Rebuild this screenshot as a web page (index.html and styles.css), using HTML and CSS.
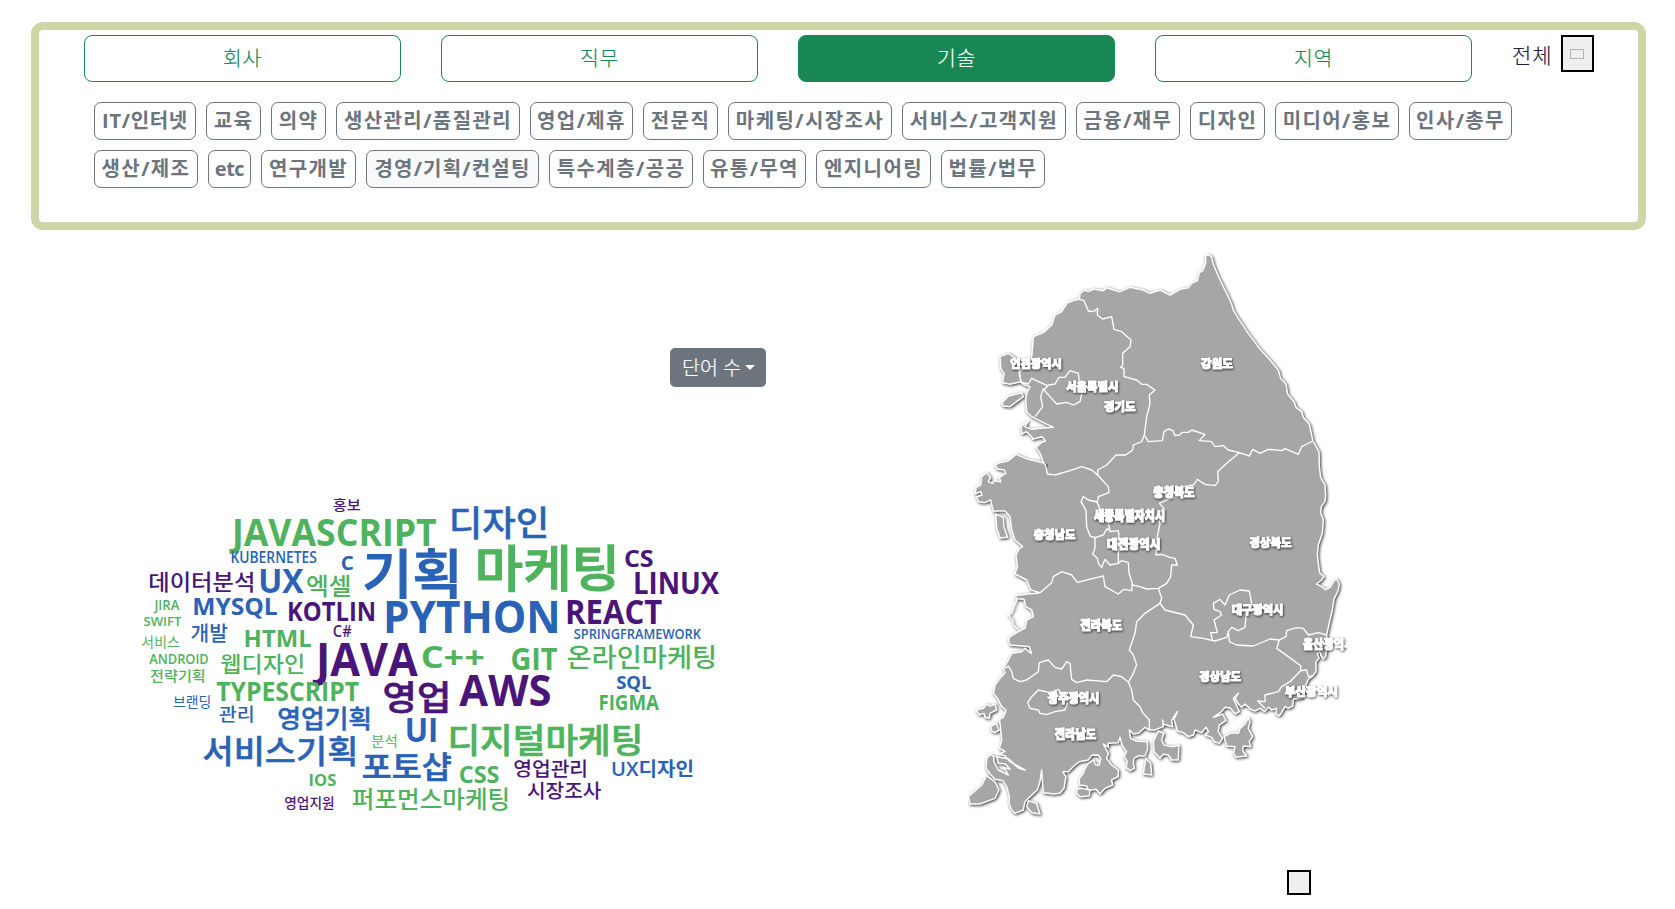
FILE: index.html
```html
<!DOCTYPE html>
<html lang="ko">
<head>
<meta charset="utf-8">
<title>채용 기술 분석</title>
<link rel="stylesheet" href="styles.css">
</head>
<body>
<section class="filters">
  <div class="tabs">
    <button class="tab">회사</button>
    <button class="tab">직무</button>
    <button class="tab active">기술</button>
    <button class="tab">지역</button>
    <div class="total"><span>전체</span><button class="square-btn"><i class="mark"></i></button></div>
  </div>
  <div class="chips">
    <button class="chip mixed" style="width:102px">IT/인터넷</button>
    <button class="chip" style="width:55px">교육</button>
    <button class="chip" style="width:55px">의약</button>
    <button class="chip" style="width:184px">생산관리/품질관리</button>
    <button class="chip" style="width:103px">영업/제휴</button>
    <button class="chip" style="width:75px">전문직</button>
    <button class="chip" style="width:164px">마케팅/시장조사</button>
    <button class="chip" style="width:164px">서비스/고객지원</button>
    <button class="chip" style="width:104px">금융/재무</button>
    <button class="chip" style="width:75px">디자인</button>
    <button class="chip" style="width:124px">미디어/홍보</button>
    <button class="chip" style="width:103px">인사/총무</button>
  </div>
  <div class="chips">
    <button class="chip" style="width:104px">생산/제조</button>
    <button class="chip latin" style="width:43px">etc</button>
    <button class="chip" style="width:95px">연구개발</button>
    <button class="chip hovered" style="width:173px">경영/기획/컨설팅</button>
    <button class="chip" style="width:144px">특수계층/공공</button>
    <button class="chip" style="width:103px">유통/무역</button>
    <button class="chip" style="width:115px">엔지니어링</button>
    <button class="chip" style="width:104px">법률/법무</button>
  </div>
</section>

<main class="charts">
  <div class="cloud-col">
    <button class="dropdown">단어 수<i class="caret"></i></button>
    <svg class="cloud" id="cloud" viewBox="0 0 1800 1020"></svg>
  </div>
  <div class="map-col">
    <svg class="map" viewBox="24 0 1137 1800">
      <g class="land">
        <path d="M737,46 745,44 754,50 760,72 775,108 790,140 805,170 814,190 820,210 835,235 865,280 900,327 930,360 955,390 962,415 978,432 983,462 1003,487 1008,502 1025,515 1030,532 1048,552 1054,580 1059,603 1077,635 1078,680 1082,712 1095,735 1097,765 1095,785 1084,800 1082,818 1090,840 1087,880 1075,915 1072,945 1077,985 1080,1000 1092,1009 1085,1020 1070,1032 1085,1040 1097,1049 1110,1042 1122,1022 1130,1017 1138,1032 1135,1050 1122,1078 1117,1110 1110,1140 1100,1185 1103,1210 1097,1250 1090,1257 1082,1245 1080,1235 1072,1240 1077,1255 1068,1265 1068,1295 1058,1308 1045,1318 1038,1335 1032,1360 1025,1375 1000,1378 998,1398 985,1405 975,1400 965,1418 957,1428 947,1420 950,1405 935,1410 925,1402 915,1415 900,1405 885,1413 872,1408 855,1392 845,1402 835,1392 825,1375 835,1360 820,1375 832,1400 838,1415 825,1422 812,1405 795,1402 785,1415 760,1432 788,1422 798,1442 778,1455 775,1475 788,1495 778,1510 763,1505 755,1492 735,1485 745,1475 738,1462 725,1478 705,1470 700,1485 685,1490 670,1478 652,1473 647,1455 640,1432 652,1415 645,1432 635,1440 638,1460 610,1453 608,1440 610,1460 585,1470 568,1470 555,1462 535,1480 520,1482 508,1470 512,1495 530,1503 562,1505 563,1528 555,1548 535,1548 522,1555 520,1570 523,1585 510,1592 498,1582 502,1565 492,1550 500,1535 487,1518 480,1492 475,1508 445,1510 445,1522 430,1512 445,1540 440,1555 455,1575 475,1590 475,1610 455,1620 458,1635 435,1645 420,1662 408,1648 385,1652 380,1638 358,1635 358,1615 370,1600 375,1585 385,1570 400,1560 407,1575 418,1575 422,1555 415,1545 395,1546 385,1560 358,1565 345,1575 325,1595 308,1595 318,1610 312,1645 300,1660 280,1662 265,1660 250,1658 247,1625 245,1590 240,1625 232,1650 210,1670 195,1685 190,1710 165,1720 155,1710 147,1690 148,1670 140,1640 128,1622 105,1618 90,1602 78,1585 80,1555 92,1543 102,1550 102,1565 115,1590 145,1605 130,1582 150,1588 136,1572 115,1570 110,1550 145,1556 175,1584 195,1590 150,1565 135,1548 118,1542 135,1534 118,1525 125,1500 122,1470 120,1450 118,1438 130,1432 138,1410 125,1400 112,1375 100,1360 105,1335 120,1315 135,1298 130,1285 145,1260 155,1240 185,1235 195,1225 214,1240 208,1220 150,1215 145,1200 150,1190 178,1173 195,1165 200,1140 220,1130 215,1110 197,1100 192,1078 168,1076 168,1066 240,1058 212,1050 200,1020 165,1002 172,980 168,945 178,925 188,920 165,900 155,870 150,830 135,813 110,813 100,815 92,780 75,788 55,785 50,770 66,765 62,755 45,762 48,742 62,735 65,710 80,698 92,712 85,725 98,730 104,722 122,725 118,712 137,700 133,690 112,687 105,675 118,668 145,662 168,643 205,658 250,668 240,640 228,622 246,606 256,603 246,590 218,598 215,590 200,575 185,582 183,560 205,543 195,560 215,568 240,565 280,562 255,550 225,535 215,530 200,515 197,480 200,460 210,440 195,435 183,428 178,400 185,385 215,350 218,320 220,290 250,278 275,255 285,225 305,215 322,188 345,180 358,178 360,160 375,150 385,155 400,147 430,152 440,143 480,155 510,142 550,150 570,160 600,150 630,165 660,148 685,143 695,130 712,122 718,98 728,92 737,70Z"/>
        <path d="M120,350 145,340 175,360 178,400 183,425 150,433 128,428 132,400 122,385Z"/>
        <path d="M125,490 145,468 185,458 190,470 150,500 130,498Z"/>
        <path d="M107,822 130,832 132,860 143,892 120,894 110,865Z"/>
        <path d="M48,1410 70,1405 80,1392 90,1398 105,1392 110,1410 90,1420 88,1435 75,1432 72,1420 58,1425Z"/>
        <path d="M92,1460 108,1450 118,1470 105,1478 95,1473Z"/>
        <path d="M80,1607 105,1625 117,1650 105,1675 60,1692 30,1692 25,1670 65,1635Z"/>
        <path d="M205,1682 230,1690 240,1722 215,1718 200,1700Z"/>
        <path d="M350,1648 365,1645 390,1650 388,1668 360,1670 350,1660Z"/>
        <path d="M557,1555 572,1570 575,1605 550,1602Z"/>
        <path d="M595,1473 612,1480 605,1500 612,1515 640,1520 657,1515 655,1560 635,1560 625,1545 610,1543 600,1555 582,1535 580,1505Z"/>
        <path d="M792,1490 815,1478 835,1480 840,1465 855,1452 865,1432 870,1445 865,1465 878,1490 868,1505 872,1520 850,1518 848,1532 860,1548 828,1552 820,1540 825,1520 800,1518Z"/>
        <path class="line" d="M172,1078 162,1100 155,1120 145,1125 158,1140 160,1155 180,1173"/>
      </g>
      <path class="inlet" d="M254,670 264,674 260,690Z M272,704 288,703 280,708Z"/>
      <g class="borders">
        <path d="M358,178 372,182 385,213 400,215 413,205 412,225 428,237 455,230 462,268 485,275 513,300 510,320 488,340 488,375 482,382 492,385 492,410 530,420 545,433 560,433 585,450 568,465 570,490 560,530 553,585"/>
        <path d="M553,585 565,605 607,602 612,575 625,567 638,571 645,587 658,585 668,577 685,577 695,570 735,583 718,602 755,605 765,620 790,617 805,630 838,638 868,648 878,628 900,640 925,628 965,632 975,626 1015,643 1025,620 1059,603"/>
        <path d="M553,585 545,605 520,615 518,630 497,645 468,645 440,675 413,690 413,705 395,690 365,680 330,692 285,705 262,702 257,675 250,668"/>
        <path d="M265,435 285,432 297,412 315,412 330,392 355,400 358,425 368,450 360,485 340,495 320,487 290,492 270,470 252,450 265,435"/>
        <path d="M178,425 205,432 215,415 262,437M250,445 242,470 248,500 225,530"/>
        <path d="M413,705 445,740 447,758 415,770 412,786 385,780 370,770 363,785 378,812 380,860 390,888 405,893 430,885 440,867 450,870"/>
        <path d="M410,786 418,800 415,830 445,845 450,875 475,872 478,900 M405,893 405,925 398,942 412,955 415,970 425,982 435,958 450,975 475,970 475,930 478,900"/>
        <path d="M475,970 485,962 505,968 507,1000 517,1030 515,1052 492,1048 475,1062 435,1040 430,1008 400,1015 352,1027 335,1005 305,995 280,1010 275,1028 240,1058"/>
        <path d="M517,1035 540,1040 560,1047 595,1045 620,1030 632,1010 635,975 652,975 645,955 630,952 605,943 588,945 592,890 600,850 592,825 612,805 598,790 620,780 655,770 670,740 700,735 712,718 735,733 765,737 775,725 773,695 800,670 838,638"/>
        <path d="M595,1045 605,1075 600,1090 555,1120 530,1145 525,1180 508,1230 520,1245 530,1275 520,1300 505,1327"/>
        <path d="M600,1090 615,1110 675,1125 700,1155 692,1190 730,1195 765,1203 800,1192 805,1175 M758,1203 752,1178 772,1178 762,1140 785,1125 780,1115 762,1108 760,1090 780,1078 795,1095 808,1065 840,1050 868,1053 875,1090 858,1130 855,1162 835,1172 815,1162 805,1175 808,1205 830,1215 880,1218 930,1197 958,1200"/>
        <path d="M958,1200 978,1190 980,1172 1010,1163 1030,1165 1045,1185 1075,1178 1100,1185 M958,1200 950,1225 985,1250 1022,1277 1022,1292 1040,1290 1045,1310 1058,1308 M1022,1292 990,1325 965,1340 955,1355 915,1365 915,1385 893,1383 915,1405"/>
        <path d="M135,1285 145,1278 155,1295 160,1315 180,1325 200,1320 235,1295 238,1268 265,1260 285,1282 305,1287 320,1265 330,1270 335,1318 350,1328 380,1320 440,1325 460,1305 485,1310 505,1327 515,1350 520,1380 540,1400 548,1418 568,1440 568,1470"/>
        <path d="M203,1388 215,1370 235,1350 270,1358 295,1348 310,1365 322,1390 315,1410 285,1415 260,1424 240,1420 235,1410 210,1405Z"/>
      </g>
      <g id="regions"></g>
    </svg>
    <button class="square-btn small"></button>
    <svg class="next" viewBox="0 0 60 14"><path d="M12,13 Q27,-3 42,13Z"/></svg>
  </div>
</main>
<script src="app.js"></script>
</body>
</html>
```
FILE: styles.css
```css
* { box-sizing: border-box; }
body {
  margin: 0;
  height: 909px;
  overflow: hidden;
  background: #fff;
  color: #212529;
  font-family: "Open Sans", "Noto Sans CJK KR", sans-serif;
}
button { font-family: inherit; padding: 0; margin: 0; white-space: nowrap; }

.filters {
  margin: 22px 29px 0 31px;
  height: 208px;
  border: 8px solid #cdd6a6;
  border-radius: 12px;
  padding: 5px 0 0 45px;
}
.tabs { display: flex; gap: 40px; height: 47px; margin-bottom: 20px; }
.tab {
  width: 317px;
  height: 47px;
  border: 1px solid #198754;
  border-radius: 8px;
  background: #fff;
  color: #198754;
  font-size: 20.5px;
  font-weight: 300;
  line-height: 45px;
  letter-spacing: 0.6px;
  -webkit-text-stroke: 0.2px;
}
.tab.active { background: #198754; color: #fff; }
.total { display: flex; gap: 8px; font-size: 21px; font-weight: 300; line-height: 40px; color: #2b1c38; letter-spacing: 1px; -webkit-text-stroke: 0.2px; }
.square-btn {
  display: flex;
  align-items: center;
  justify-content: center;
  width: 33px;
  height: 37px;
  border: 2px solid #000;
  background: #efefef;
}
.mark { width: 14px; height: 10px; border: 1px solid #a9b3b0; }
.chips { display: flex; gap: 10px; margin: 0 0 10px 10px; height: 38px; }
.chip {
  height: 38px;
  border: 1px solid #6c757d;
  border-radius: 7px;
  background: #fff;
  color: #6c757d;
  font-size: 20px;
  font-weight: 700;
  line-height: 36px;
  letter-spacing: 1.4px;
}
.mixed { letter-spacing: 0.7px; }
.latin { letter-spacing: -0.5px; }
.hovered { background: #f8f9fa; letter-spacing: 1.2px; }

.charts { display: flex; }
.cloud-col { width: 960px; padding: 118px 0 0 130px; }
.dropdown {
  display: flex;
  align-items: center;
  gap: 4px;
  width: 96px;
  height: 39px;
  margin-left: 540px;
  padding-left: 12px;
  border: 0;
  border-radius: 5px;
  background: #6c757d;
  color: #fff;
  font-size: 19.5px;
  font-weight: 300;
  line-height: 36px;
  -webkit-text-stroke: 0.2px;
}
.caret { border: 5.5px solid transparent; border-top-color: #fff; border-bottom: 0; }
.cloud { display: block; width: 600px; height: 340px; margin-top: 93px; overflow: visible; }
.green { fill: #4fb35d; stroke: #4fb35d; }
.blue { fill: #2a62b5; stroke: #2a62b5; }
.purple { fill: #4a1578; stroke: #4a1578; }

.map-col { padding-top: 10px; }
.map { display: block; width: 379px; height: 600px; margin-left: 8px; overflow: hidden; }
.land { fill: #a6a6a6; stroke: #fff; stroke-width: 4.5; stroke-linejoin: round; filter: drop-shadow(3px 3px 4px rgba(0, 0, 0, 0.8)); }
.line, .borders { fill: none; stroke: #fff; stroke-width: 4; stroke-linejoin: round; }
.inlet { fill: #444; }
.region { fill: #fff; stroke: #fff; filter: drop-shadow(2px 3px 3px rgba(0, 0, 0, 0.7)); }
.small { width: 24px; height: 25px; margin: 30px 0 0 327px; }
.next { display: block; width: 60px; height: 14px; margin: 10px 0 0 50px; }
.next path { fill: #ddd; }
```
FILE: app.js
```js
// Word entries: text, colour, weight, left, top, right, bottom.
const words = [
  ["홍보", "purple", 500, 610, 55, 690, 93],
  ["JAVASCRIPT", "green", 700, 298, 116, 918, 197],
  ["KUBERNETES", "blue", 600, 305, 215, 559, 249],
  ["C", "blue", 700, 636, 226, 670, 270],
  ["기획", "blue", 500, 705, 207, 978, 355, 0.022],
  ["데이터분석", "purple", 500, 60, 275, 368, 335],
  ["UX", "blue", 700, 393, 266, 521, 341],
  ["엑셀", "green", 500, 532, 284, 660, 351],
  ["JIRA", "green", 600, 70, 361, 148, 391],
  ["MYSQL", "blue", 700, 193, 354, 441, 418],
  ["KOTLIN", "purple", 700, 477, 366, 732, 425],
  ["PYTHON", "blue", 700, 770, 364, 1281, 461],
  ["SWIFT", "green", 600, 42, 410, 154, 439],
  ["개발", "blue", 500, 184, 430, 292, 487],
  ["C#", "purple", 600, 611, 436, 664, 470],
  ["서비스", "green", 400, 36, 468, 147, 505],
  ["HTML", "green", 700, 347, 450, 543, 501],
  ["JAVA", "purple", 700, 548, 487, 863, 588],
  ["C++", "green", 700, 878, 497, 1060, 565],
  ["ANDROID", "green", 600, 58, 520, 234, 551],
  ["전략기획", "green", 500, 62, 567, 222, 606],
  ["웹디자인", "green", 500, 273, 521, 519, 581],
  ["TYPESCRIPT", "green", 700, 260, 607, 686, 664],
  ["영업", "purple", 500, 764, 604, 951, 699, 0.022],
  ["브랜딩", "blue", 400, 131, 647, 239, 685],
  ["관리", "blue", 500, 268, 679, 367, 729],
  ["영업기획", "blue", 500, 446, 680, 717, 751, 0.02],
  ["서비스기획", "blue", 500, 221, 768, 673, 858, 0.015],
  ["분석", "green", 400, 725, 766, 798, 802],
  ["UI", "blue", 700, 832, 714, 917, 787],
  ["IOS", "green", 700, 540, 882, 617, 919],
  ["포토샵", "blue", 500, 700, 816, 962, 900, 0.02],
  ["영업지원", "purple", 500, 465, 949, 610, 988],
  ["퍼포먼스마케팅", "green", 500, 668, 924, 1132, 990],
  ["디자인", "blue", 500, 967, 80, 1248, 178, 0.01],
  ["마케팅", "green", 500, 1046, 195, 1452, 333, 0.022],
  ["CS", "purple", 700, 1486, 209, 1568, 262],
  ["LINUX", "purple", 700, 1516, 276, 1768, 342],
  ["REACT", "purple", 700, 1313, 358, 1595, 432],
  ["SPRINGFRAMEWORK", "blue", 600, 1333, 446, 1713, 476],
  ["GIT", "green", 700, 1146, 506, 1281, 572],
  ["온라인마케팅", "green", 500, 1313, 497, 1752, 568],
  ["AWS", "purple", 700, 988, 587, 1260, 680],
  ["SQL", "blue", 700, 1461, 587, 1563, 637],
  ["FIGMA", "green", 700, 1410, 646, 1587, 692],
  ["디지털마케팅", "green", 500, 963, 732, 1528, 828, 0.02],
  ["CSS", "green", 700, 990, 858, 1106, 910],
  ["영업관리", "purple", 500, 1153, 838, 1367, 893],
  ["UX디자인", "blue", 600, 1448, 840, 1687, 895],
  ["시장조사", "purple", 500, 1193, 904, 1413, 958]
];

const regions = [
  ["인천광역시", 152, 355, 302, 387], ["서울특별시", 319, 423, 472, 456],
  ["경기도", 433, 482, 525, 516], ["강원도", 724, 357, 817, 388],
  ["충청북도", 581, 740, 703, 775], ["세종특별자치시", 402, 808, 612, 844],
  ["충청남도", 222, 868, 345, 902], ["대전광역시", 443, 895, 598, 930],
  ["경상북도", 870, 890, 993, 923], ["전라북도", 362, 1138, 485, 1173],
  ["대구광역시", 817, 1093, 967, 1127], ["울산광역시", 1030, 1195, 1180, 1230],
  ["경상남도", 719, 1293, 842, 1325], ["부산광역시", 976, 1337, 1130, 1370],
  ["광주광역시", 264, 1357, 415, 1392], ["전라남도", 285, 1465, 407, 1500]
];

const family = '"Open Sans", "Noto Sans CJK KR", sans-serif';
const pen = document.createElement("canvas").getContext("2d");

// Sizes a label so that its ink fills the given box.
function place(parent, text, cls, weight, x1, y1, x2, y2, stroke = 0) {
  pen.font = `${weight} 200px ${family}`;
  const m = pen.measureText(text);
  // The J hangs below the baseline, so those words are sized by their other capitals.
  const v = text[0] === "J" ? pen.measureText("A") : m;
  const sy = (y2 - y1) / (v.actualBoundingBoxAscent + v.actualBoundingBoxDescent);
  const sx = (x2 - x1) / (m.actualBoundingBoxLeft + m.actualBoundingBoxRight);
  const el = document.createElementNS("http://www.w3.org/2000/svg", "text");
  el.textContent = text;
  el.setAttribute("class", cls);
  el.setAttribute("font-weight", weight);
  el.setAttribute("font-size", 200 * sy);
  el.setAttribute("stroke-width", stroke * 200 * sy);
  el.setAttribute("x", x1 + m.actualBoundingBoxLeft * sx);
  el.setAttribute("y", y2 - v.actualBoundingBoxDescent * sy);
  el.setAttribute("textLength", m.width * sx);
  el.setAttribute("lengthAdjust", "spacingAndGlyphs");
  parent.appendChild(el);
}

const cloud = document.getElementById("cloud");
words.forEach(([text, colour, weight, ...box]) => place(cloud, text, colour, weight, ...box));
const map = document.getElementById("regions");
regions.forEach(([text, ...box]) => place(map, text, "region", 900, ...box, 0.1));
```
